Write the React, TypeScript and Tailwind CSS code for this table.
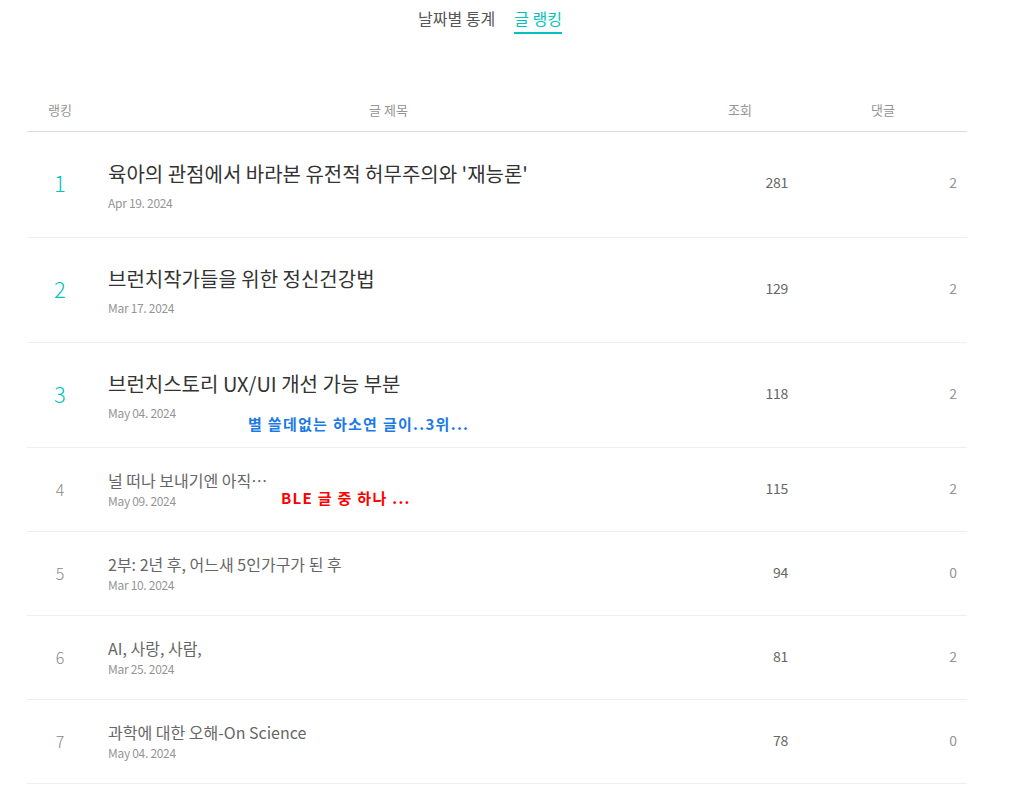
import React from "react";

type Post = {
  rank: number;
  title: string;
  date: string;
  views: number;
  comments: number;
};

const posts: Post[] = [
  { rank: 1, title: "육아의 관점에서 바라본 유전적 허무주의와 '재능론'", date: "Apr 19. 2024", views: 281, comments: 2 },
  { rank: 2, title: "브런치작가들을 위한 정신건강법", date: "Mar 17. 2024", views: 129, comments: 2 },
  { rank: 3, title: "브런치스토리 UX/UI 개선 가능 부분", date: "May 04. 2024", views: 118, comments: 2 },
  { rank: 4, title: "널 떠나 보내기엔 아직…", date: "May 09. 2024", views: 115, comments: 2 },
  { rank: 5, title: "2부: 2년 후, 어느새 5인가구가 된 후", date: "Mar 10. 2024", views: 94, comments: 0 },
  { rank: 6, title: "AI, 사랑, 사람,", date: "Mar 25. 2024", views: 81, comments: 2 },
  { rank: 7, title: "과학에 대한 오해-On Science", date: "May 04. 2024", views: 78, comments: 0 },
];

const font = "font-['Noto_Sans_CJK_KR','Noto_Sans',sans-serif]";

function Row({ post }: { post: Post }) {
  const top = post.rank <= 3;
  const height = post.rank === 1 ? "h-[106px]" : top ? "h-[105px]" : "h-[84px]";
  const lift = top ? "-mt-[4px]" : "-mt-[2px]";
  return (
    <div className={`grid grid-cols-[66px_599px_96px_1fr] items-center border-b border-[#eeeeee] ${height}`}>
      <div
        className={`text-center font-light ${lift} ${
          top ? "text-[22px] text-[#00c3bd]" : "text-[16px] text-[#888888]"
        }`}
      >
        {post.rank}
      </div>
      <div className={top ? "pl-[15px] pt-[2px]" : "pl-[15px]"}>
        <div
          className={
            top
              ? "text-[20px] leading-[26px] text-[#333333]"
              : "text-[16px] leading-[20px] text-[#666666]"
          }
        >
          {post.title}
        </div>
        <div className={`text-[12px] leading-[16px] text-[#959595] tracking-[-0.3px] ${top ? "mt-[8px]" : "mt-[3px]"}`}>
          {post.date}
        </div>
      </div>
      <div className={`text-right text-[14px] text-[#666666] tracking-[-0.3px] ${lift}`}>{post.views}</div>
      <div className={`pr-[10px] text-right text-[14px] text-[#959595] ${lift}`}>{post.comments}</div>
    </div>
  );
}

export default function App() {
  return (
    <div className={`${font} min-h-[785px] w-[1014px] bg-white`}>
      <div className="flex justify-center gap-[19px] pr-[34px] pt-[6px] text-[16px]">
        <div className="pb-[4px] text-[#555555]">날짜별 통계</div>
        <div className="border-b-2 border-[#00c3bd] pb-[1px] text-[#00c3bd]">글 랭킹</div>
      </div>

      <div className="relative mx-[27px] mt-[54px] w-[940px]">
        <div className="grid h-[44px] grid-cols-[66px_599px_96px_1fr] items-center border-b border-[#dddddd] text-[13px] text-[#959595]">
          <div className="text-center">랭킹</div>
          <div className="pr-[8px] text-center">글 제목</div>
          <div className="text-center">조회</div>
          <div className="pl-[21px] pr-[10px] text-center">댓글</div>
        </div>
        {posts.map((p) => (
          <Row key={p.rank} post={p} />
        ))}

        <div className="absolute left-[221px] top-[325px] text-[15px] font-bold tracking-[1.3px] text-[#1a7ae6]">
          별 쓸데없는 하소연 글이..3위...
        </div>
        <div className="absolute left-[254px] top-[399px] text-[15px] font-bold tracking-[1.3px] text-[#ff0000]">
          BLE 글 중 하나 ...
        </div>
      </div>
    </div>
  );
}
